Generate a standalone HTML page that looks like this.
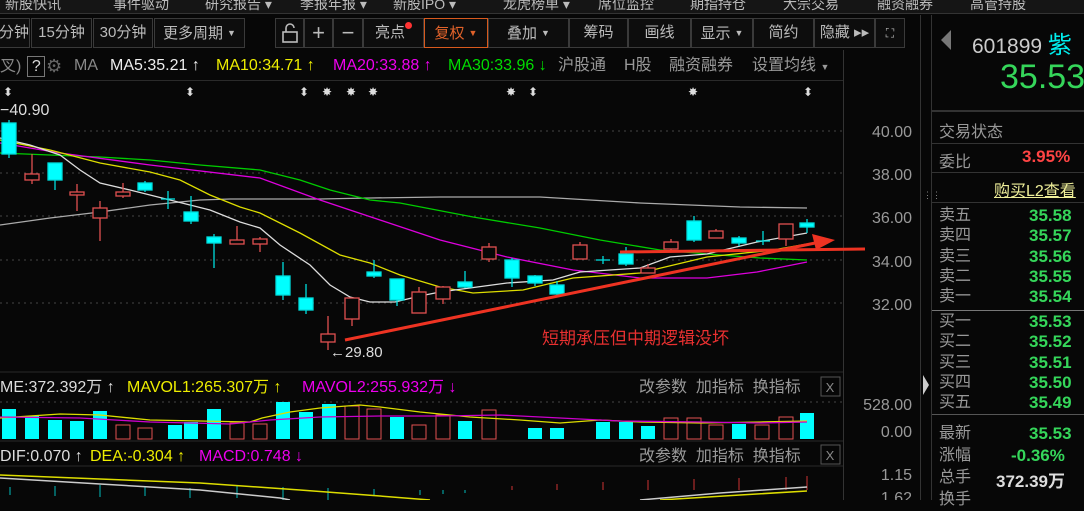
<!DOCTYPE html>
<html><head><meta charset="utf-8"><style>
*{margin:0;padding:0;box-sizing:border-box}
body{width:1084px;height:500px;background:#070707;overflow:hidden;position:relative;font-family:"Liberation Sans","Noto Sans CJK SC",sans-serif;color:#aaa}
.a{position:absolute;white-space:nowrap}
.menu{top:0;left:0;width:1084px;height:14px;background:#151515;border-bottom:1px solid #333;font-size:14px;color:#bbb;line-height:8px;overflow:hidden}
.btn{position:absolute;top:18px;height:30px;border:1px solid #3a3a3a;background:#0d0d0d;color:#bbb;font-size:15px;line-height:28px;text-align:center}
.tri{font-size:9px;vertical-align:2px;margin-left:4px}
.rp{font-size:16px}
.g{color:#35d65a;font-weight:bold;font-size:17px}
.ma{position:absolute;top:56px;font-size:16px;line-height:20px;white-space:nowrap}
</style></head><body>
<div class="a menu">
<span class="a" style="left:5px">新股快讯</span><span class="a" style="left:113px">事件驱动</span><span class="a" style="left:205px">研究报告 ▾</span><span class="a" style="left:300px">季报年报 ▾</span><span class="a" style="left:393px">新股IPO ▾</span><span class="a" style="left:503px">龙虎榜单 ▾</span><span class="a" style="left:598px">席位监控</span><span class="a" style="left:690px">期指持仓</span><span class="a" style="left:783px">大宗交易</span><span class="a" style="left:877px">融资融券</span><span class="a" style="left:970px">高管持股</span>
</div>
<div class="btn" style="left:-2px;width:32px">分钟</div>
<div class="btn" style="left:31px;width:61px">15分钟</div>
<div class="btn" style="left:93px;width:60px">30分钟</div>
<div class="btn" style="left:154px;width:91px">更多周期<span class="tri">▼</span></div>
<div class="btn" style="left:275px;width:29px"><svg width="20" height="22" style="vertical-align:middle"><rect x="3" y="10" width="14" height="10" fill="none" stroke="#bbb" stroke-width="1.6"/><path d="M6 10V6a4 4 0 0 1 8 0" fill="none" stroke="#bbb" stroke-width="1.6"/></svg></div>
<div class="btn" style="left:304px;width:29px;font-size:22px">+</div>
<div class="btn" style="left:333px;width:30px;font-size:22px">−</div>
<div class="btn" style="left:363px;width:61px">亮点<span style="display:inline-block;width:7px;height:7px;border-radius:50%;background:#f33;vertical-align:8px"></span></div>
<div class="btn" style="left:424px;width:64px;border-color:#d85a1e;color:#e0622a">复权<span class="tri">▼</span></div>
<div class="btn" style="left:488px;width:81px">叠加<span class="tri">▼</span></div>
<div class="btn" style="left:569px;width:59px">筹码</div>
<div class="btn" style="left:628px;width:63px">画线</div>
<div class="btn" style="left:691px;width:62px">显示<span class="tri">▼</span></div>
<div class="btn" style="left:753px;width:61px">简约</div>
<div class="btn" style="left:814px;width:61px">隐藏 ▸▸</div>
<div class="btn" style="left:875px;width:30px;font-size:12px">⛶</div>
<div class="ma" style="left:0;color:#888">叉)<span style="display:inline-block;border:1px solid #777;width:18px;height:21px;text-align:center;color:#ddd;margin:0 0 0 6px">?</span></div>
<div class="ma" style="left:46px;color:#666;font-size:18px">⚙</div>
<div class="ma" style="left:74px;color:#888">MA</div>
<div class="ma" style="left:110px;color:#eee">MA5:35.21 ↑</div>
<div class="ma" style="left:216px;color:#ee0">MA10:34.71 ↑</div>
<div class="ma" style="left:333px;color:#e0e">MA20:33.88 ↑</div>
<div class="ma" style="left:448px;color:#0d0">MA30:33.96 ↓</div>
<div class="ma" style="left:558px;color:#999">沪股通</div>
<div class="ma" style="left:624px;color:#999">H股</div>
<div class="ma" style="left:669px;color:#999">融资融券</div>
<div class="ma" style="left:752px;color:#999">设置均线 <span style="font-size:9px">▼</span></div>
<div class="a" style="left:0;top:80px;width:843px;height:1px;background:#2a2a2a"></div>
<div class="a" style="left:843px;top:50px;width:1px;height:450px;background:#333"></div>
<div class="a" style="left:920px;top:15px;width:1px;height:485px;background:#333"></div>
<div class="a" style="left:931px;top:15px;width:1px;height:485px;background:#333"></div>
<svg class="a" style="left:0;top:0" width="920" height="500">
<g fill="#ddd" font-size="12" text-anchor="middle"><text x="8" y="96">⬍</text><text x="190" y="96">⬍</text><text x="304" y="96">⬍</text><text x="327" y="96">✸</text><text x="351" y="96">✸</text><text x="373" y="96">✸</text><text x="511" y="96">✸</text><text x="533" y="96">⬍</text><text x="693" y="96">✸</text><text x="808" y="96">⬍</text></g>
<text x="0" y="115" fill="#ddd" font-size="16">−40.90</text>
<g stroke="#444" stroke-dasharray="2,4"><line x1="0" y1="131" x2="843" y2="131"/><line x1="0" y1="173" x2="843" y2="173"/><line x1="0" y1="216" x2="843" y2="216"/><line x1="0" y1="260" x2="843" y2="260"/><line x1="0" y1="303" x2="843" y2="303"/><line x1="0" y1="402" x2="843" y2="402"/></g>
<g fill="#999" font-size="16" text-anchor="end"><text x="912" y="137">40.00</text><text x="912" y="180">38.00</text><text x="912" y="223">36.00</text><text x="912" y="267">34.00</text><text x="912" y="310">32.00</text><text x="912" y="410">528.00</text><text x="912" y="437">0.00</text><text x="912" y="480">1.15</text><text x="912" y="503">1.62</text></g>
<g fill="none" stroke-width="1.3">
<polyline stroke="#aaa" points="0,225 50,218 100,212 150,205 200,200 230,199 270,199 320,199 370,198 440,197 540,197 640,203 740,207 807,208"/>
<polyline stroke="#0c0" points="0,153 50,155 100,157 150,160 200,165 260,170 300,180 330,190 370,200 400,203 473,217 540,228 600,240 660,250 720,255 760,258 807,260"/>
<polyline stroke="#d0d" points="0,143 60,153 150,165 260,178 320,200 380,220 440,240 507,257 573,270 640,278 707,278 757,272 807,262"/>
<polyline stroke="#dd0" points="0,140 50,150 100,163 150,172 180,180 210,195 240,207 260,213 300,233 340,255 370,263 400,275 440,287 473,293 523,290 573,278 640,273 707,257 773,250 807,244"/>
<polyline stroke="#ddd" points="0,138 30,145 60,155 80,170 100,183 130,190 170,200 210,210 240,222 260,228 280,245 310,265 330,285 350,297 370,302 395,302 420,296 440,292 507,283 553,280 580,272 640,268 670,257 707,254 757,242 807,233"/>
</g>
<g stroke-width="1.3">
<g stroke="#0dd" fill="#0ff">
<line x1="9" y1="120" x2="9" y2="158"/><rect x="2" y="123" width="14" height="31"/>
<line x1="55" y1="163" x2="55" y2="190"/><rect x="48" y="163" width="14" height="17"/>
<line x1="145" y1="181" x2="145" y2="192"/><rect x="138" y="183" width="14" height="7"/>
<line x1="168" y1="191" x2="168" y2="209"/><line x1="161" y1="199" x2="175" y2="199"/>
<line x1="191" y1="196" x2="191" y2="224"/><rect x="184" y="212" width="14" height="9"/>
<line x1="214" y1="234" x2="214" y2="268"/><rect x="207" y="237" width="14" height="6"/>
<line x1="283" y1="262" x2="283" y2="300"/><rect x="276" y="276" width="14" height="19"/>
<line x1="306" y1="284" x2="306" y2="314"/><rect x="299" y="298" width="14" height="12"/>
<line x1="374" y1="260" x2="374" y2="278"/><rect x="367" y="272" width="14" height="4"/>
<line x1="397" y1="279" x2="397" y2="306"/><rect x="390" y="279" width="14" height="21"/>
<line x1="465" y1="271" x2="465" y2="288"/><rect x="458" y="282" width="14" height="5"/>
<line x1="512" y1="258" x2="512" y2="287"/><rect x="505" y="260" width="14" height="18"/>
<line x1="535" y1="275" x2="535" y2="286"/><rect x="528" y="276" width="14" height="7"/>
<line x1="557" y1="281" x2="557" y2="295"/><rect x="550" y="285" width="14" height="9"/>
<line x1="603" y1="256" x2="603" y2="264"/><line x1="596" y1="260" x2="610" y2="260"/>
<line x1="626" y1="247" x2="626" y2="266"/><rect x="619" y="254" width="14" height="10"/>
<line x1="694" y1="216" x2="694" y2="242"/><rect x="687" y="221" width="14" height="19"/>
<line x1="739" y1="236" x2="739" y2="246"/><rect x="732" y="238" width="14" height="5"/>
<line x1="763" y1="231" x2="763" y2="245"/><line x1="756" y1="241" x2="770" y2="241"/>
<line x1="807" y1="219" x2="807" y2="233"/><rect x="800" y="223" width="14" height="4"/>
</g>
<g stroke="#e05050" fill="#070707">
<line x1="32" y1="154" x2="32" y2="184"/><rect x="25" y="174" width="14" height="6"/>
<line x1="77" y1="184" x2="77" y2="211"/><rect x="70" y="192" width="14" height="3"/>
<line x1="100" y1="201" x2="100" y2="241"/><rect x="93" y="208" width="14" height="10"/>
<line x1="123" y1="183" x2="123" y2="198"/><rect x="116" y="192" width="14" height="4"/>
<line x1="237" y1="226" x2="237" y2="244"/><rect x="230" y="240" width="14" height="4"/>
<line x1="260" y1="237" x2="260" y2="252"/><rect x="253" y="239" width="14" height="5"/>
<line x1="328" y1="316" x2="328" y2="350"/><rect x="321" y="334" width="14" height="8"/>
<line x1="352" y1="298" x2="352" y2="326"/><rect x="345" y="298" width="14" height="21"/>
<line x1="419" y1="287" x2="419" y2="313"/><rect x="412" y="292" width="14" height="21"/>
<line x1="443" y1="286" x2="443" y2="304"/><rect x="436" y="287" width="14" height="12"/>
<line x1="489" y1="243" x2="489" y2="262"/><rect x="482" y="247" width="14" height="12"/>
<line x1="580" y1="242" x2="580" y2="259"/><rect x="573" y="245" width="14" height="14"/>
<line x1="648" y1="264" x2="648" y2="273"/><rect x="641" y="268" width="14" height="5"/>
<line x1="671" y1="239" x2="671" y2="250"/><rect x="664" y="242" width="14" height="7"/>
<line x1="716" y1="229" x2="716" y2="238"/><rect x="709" y="231" width="14" height="7"/>
<line x1="786" y1="224" x2="786" y2="246"/><rect x="779" y="224" width="14" height="15"/>
</g>
</g>
<g stroke="#e32" stroke-width="3" fill="#e32">
<line x1="345" y1="340" x2="820" y2="242"/><polygon points="835,240 812,234 816,250" stroke="none"/>
<line x1="620" y1="252" x2="865" y2="249"/>
</g>
<text x="330" y="357" fill="#ddd" font-size="15">←29.80</text>
<text x="542" y="344" fill="#e83030" font-size="17">短期承压但中期逻辑没坏</text>
<line x1="0" y1="372" x2="843" y2="372" stroke="#2a2a2a"/>
<g font-size="16"><text x="0" y="392" fill="#ddd">ME:372.392万 ↑</text><text x="127" y="392" fill="#ee0">MAVOL1:265.307万 ↑</text><text x="302" y="392" fill="#e0e">MAVOL2:255.932万 ↓</text>
<text x="639" y="392" fill="#999">改参数 &#160;加指标 &#160;换指标</text>
<text x="0" y="461" fill="#ddd">DIF:0.070 ↑</text><text x="90" y="461" fill="#ee0">DEA:-0.304 ↑</text><text x="199" y="461" fill="#e0e">MACD:0.748 ↓</text>
<text x="639" y="461" fill="#999">改参数 &#160;加指标 &#160;换指标</text></g>
<rect x="821" y="377" width="19" height="19" fill="none" stroke="#555"/><text x="830" y="392" fill="#888" font-size="13" text-anchor="middle">X</text>
<rect x="821" y="445" width="19" height="19" fill="none" stroke="#555"/><text x="830" y="460" fill="#888" font-size="13" text-anchor="middle">X</text>
<line x1="0" y1="441" x2="843" y2="441" stroke="#2a2a2a"/>
<g fill="#0ff"><rect x="2" y="409" width="14" height="30"/><rect x="25" y="416" width="14" height="23"/><rect x="48" y="420" width="14" height="19"/><rect x="70" y="421" width="14" height="18"/><rect x="93" y="411" width="14" height="28"/><rect x="168" y="425" width="14" height="14"/><rect x="184" y="422" width="14" height="17"/><rect x="207" y="409" width="14" height="30"/><rect x="276" y="402" width="14" height="37"/><rect x="299" y="412" width="14" height="27"/><rect x="322" y="404" width="14" height="35"/><rect x="390" y="417" width="14" height="22"/><rect x="458" y="421" width="14" height="18"/><rect x="528" y="428" width="14" height="11"/><rect x="550" y="428" width="14" height="11"/><rect x="596" y="422" width="14" height="17"/><rect x="619" y="422" width="14" height="17"/><rect x="641" y="426" width="14" height="13"/><rect x="732" y="424" width="14" height="15"/><rect x="800" y="413" width="14" height="26"/></g>
<g fill="none" stroke="#e05050"><rect x="116" y="425" width="14" height="14"/><rect x="138" y="428" width="14" height="11"/><rect x="230" y="423" width="14" height="16"/><rect x="253" y="424" width="14" height="15"/><rect x="345" y="406" width="14" height="33"/><rect x="367" y="409" width="14" height="30"/><rect x="412" y="425" width="14" height="14"/><rect x="436" y="415" width="14" height="24"/><rect x="482" y="410" width="14" height="29"/><rect x="664" y="418" width="14" height="21"/><rect x="687" y="418" width="14" height="21"/><rect x="709" y="425" width="14" height="14"/><rect x="755" y="425" width="14" height="14"/><rect x="779" y="417" width="14" height="22"/></g>
<polyline fill="none" stroke="#dd0" stroke-width="1.3" points="0,418 60,414 100,415 150,420 250,422 262,418 290,412 320,408 360,405 380,407 420,412 470,417 520,420 560,423 600,420 640,422 700,423 760,422 807,421"/>
<polyline fill="none" stroke="#c0c" stroke-width="1.3" points="0,417 80,418 150,422 230,424 270,420 320,417 380,416 440,416 500,415 560,418 620,421 700,422 760,423 807,422"/>
<line x1="0" y1="466" x2="843" y2="466" stroke="#2a2a2a"/>
<g stroke="#0bb"><line x1="10" y1="487" x2="10" y2="495"/><line x1="55" y1="486" x2="55" y2="496"/><line x1="100" y1="485" x2="100" y2="497"/><line x1="145" y1="487" x2="145" y2="496"/><line x1="190" y1="488" x2="190" y2="498"/><line x1="237" y1="486" x2="237" y2="498"/><line x1="283" y1="487" x2="283" y2="500"/><line x1="328" y1="488" x2="328" y2="500"/><line x1="374" y1="489" x2="374" y2="496"/><line x1="420" y1="490" x2="420" y2="495"/><line x1="443" y1="490" x2="443" y2="494"/><line x1="465" y1="490" x2="465" y2="493"/></g>
<g stroke="#c33"><line x1="512" y1="486" x2="512" y2="490"/><line x1="557" y1="484" x2="557" y2="490"/><line x1="603" y1="482" x2="603" y2="490"/><line x1="648" y1="480" x2="648" y2="490"/><line x1="694" y1="479" x2="694" y2="490"/><line x1="739" y1="478" x2="739" y2="490"/><line x1="786" y1="477" x2="786" y2="490"/><line x1="807" y1="476" x2="807" y2="490"/></g>
<polyline fill="none" stroke="#dd0" stroke-width="1.5" points="0,475 100,479 200,483 300,490 380,496 430,500"/>
<polyline fill="none" stroke="#ccc" stroke-width="1.5" points="0,478 100,484 200,490 280,498 290,500"/>
<polyline fill="none" stroke="#ccc" stroke-width="1.5" points="640,500 720,493 807,487"/>
<polyline fill="none" stroke="#dd0" stroke-width="1.5" points="660,500 740,495 807,491"/>
</svg>
<div class="a" style="left:923px;top:190px;font-size:9px;color:#888">⋮⋮</div>
<div class="a" style="left:923px;top:375px;width:6px;height:20px;background:#ccc;clip-path:polygon(0 0,100% 50%,0 100%)"></div>
<div class="a" style="left:941px;top:30px;width:10px;height:20px;background:#777;clip-path:polygon(100% 0,0 50%,100% 100%)"></div>
<div class="a" style="left:972px;top:25px;font-size:21px;color:#ccc">601899 <span style="color:#0ee;font-size:24px">紫</span></div>
<div class="a" style="left:1000px;top:58px;font-size:34px;color:#35d65a">35.53</div>
<div class="a" style="left:932px;top:110px;width:152px;height:2px;background:#333"></div>
<div class="a rp" style="left:939px;top:118px;color:#999">交易状态</div>
<div class="a" style="left:932px;top:143px;width:152px;height:1px;background:#333"></div>
<div class="a rp" style="left:939px;top:148px;color:#999">委比</div>
<div class="a rp" style="left:1022px;top:147px;color:#f44;font-weight:bold;font-size:17px">3.95%</div>
<div class="a" style="left:932px;top:172px;width:152px;height:1px;background:#333"></div>
<div class="a rp" style="left:994px;top:177px;color:#ee9;text-decoration:underline">购买L2查看</div>
<div class="a" style="left:932px;top:202px;width:152px;height:1px;background:#333"></div>
<div class="a rp" style="left:939px;top:206px;color:#999;line-height:20.3px">卖五<br>卖四<br>卖三<br>卖二<br>卖一</div>
<div class="a g" style="left:1029px;top:206px;line-height:20.3px">35.58<br>35.57<br>35.56<br>35.55<br>35.54</div>
<div class="a" style="left:932px;top:310px;width:152px;height:1px;background:#777"></div>
<div class="a rp" style="left:939px;top:312px;color:#999;line-height:20.3px">买一<br>买二<br>买三<br>买四<br>买五</div>
<div class="a g" style="left:1029px;top:312px;line-height:20.3px">35.53<br>35.52<br>35.51<br>35.50<br>35.49</div>
<div class="a" style="left:932px;top:414px;width:152px;height:1px;background:#555"></div>
<div class="a rp" style="left:939px;top:423px;color:#999;line-height:22px">最新<br>涨幅<br>总手<br>换手</div>
<div class="a g" style="left:1029px;top:423px;line-height:22px">35.53<br><span style="margin-left:-18px">-0.36%</span></div>
<div class="a" style="left:996px;top:467px;color:#ddd;font-weight:bold;font-size:17px">372.39万</div>
</body></html>
